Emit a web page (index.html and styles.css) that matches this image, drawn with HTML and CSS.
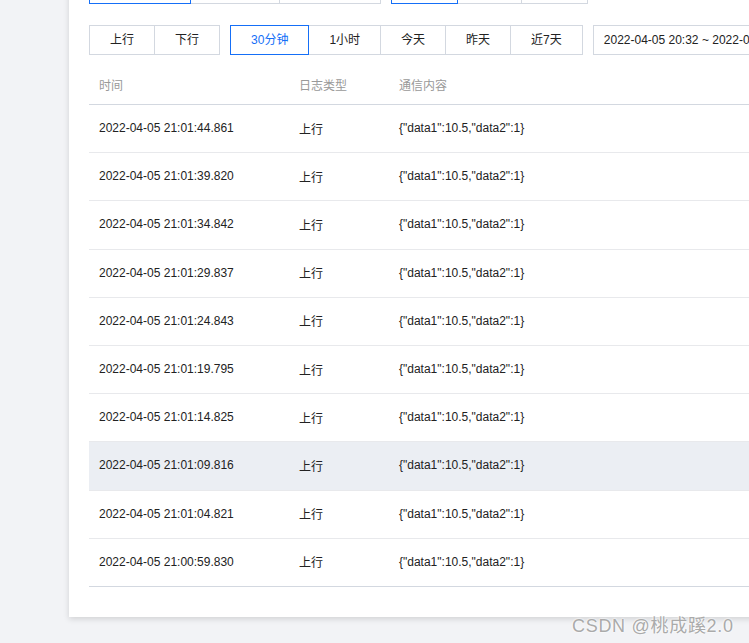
FILE: index.html
```html
<!DOCTYPE html>
<html lang="zh-CN">
<head>
<meta charset="utf-8">
<title>通信日志</title>
<link rel="stylesheet" href="styles.css">
</head>
<body>
<div class="card">
  <div class="toolbar toolbar-top">
    <div class="btn-group">
      <span class="btn btn-active btn-w101"></span>
      <span class="btn btn-w90"></span>
      <span class="btn btn-w102"></span>
    </div>
    <div class="btn-group">
      <span class="btn btn-active btn-w67"></span>
      <span class="btn btn-w65"></span>
      <span class="btn btn-w67"></span>
    </div>
  </div>
  <div class="toolbar">
    <div class="btn-group">
      <span class="btn">上行</span>
      <span class="btn">下行</span>
    </div>
    <div class="btn-group">
      <span class="btn btn-active">30分钟</span>
      <span class="btn">1小时</span>
      <span class="btn">今天</span>
      <span class="btn">昨天</span>
      <span class="btn">近7天</span>
    </div>
    <div class="date-input">2022-04-05 20:32 ~ 2022-04-05 21:02</div>
  </div>
  <table class="log-table">
    <thead>
      <tr><th class="c-time">时间</th><th class="c-type">日志类型</th><th class="c-content">通信内容</th></tr>
    </thead>
    <tbody>
      <tr><td>2022-04-05 21:01:44.861</td><td>上行</td><td>{"data1":10.5,"data2":1}</td></tr>
      <tr><td>2022-04-05 21:01:39.820</td><td>上行</td><td>{"data1":10.5,"data2":1}</td></tr>
      <tr><td>2022-04-05 21:01:34.842</td><td>上行</td><td>{"data1":10.5,"data2":1}</td></tr>
      <tr><td>2022-04-05 21:01:29.837</td><td>上行</td><td>{"data1":10.5,"data2":1}</td></tr>
      <tr><td>2022-04-05 21:01:24.843</td><td>上行</td><td>{"data1":10.5,"data2":1}</td></tr>
      <tr><td>2022-04-05 21:01:19.795</td><td>上行</td><td>{"data1":10.5,"data2":1}</td></tr>
      <tr><td>2022-04-05 21:01:14.825</td><td>上行</td><td>{"data1":10.5,"data2":1}</td></tr>
      <tr class="row-hover"><td>2022-04-05 21:01:09.816</td><td>上行</td><td>{"data1":10.5,"data2":1}</td></tr>
      <tr><td>2022-04-05 21:01:04.821</td><td>上行</td><td>{"data1":10.5,"data2":1}</td></tr>
      <tr class="row-last"><td>2022-04-05 21:00:59.830</td><td>上行</td><td>{"data1":10.5,"data2":1}</td></tr>
    </tbody>
  </table>
</div>
<div class="watermark">CSDN @桃成蹊2.0</div>
</body>
</html>
```

FILE: styles.css
```css
html, body {
  margin: 0;
  padding: 0;
  overflow: hidden;
}
body {
  background: #f2f3f6;
  font-family: "Liberation Sans", "Noto Sans CJK SC", sans-serif;
  font-size: 12px;
  color: #222;
  width: 749px;
  height: 643px;
  position: relative;
}
.card {
  margin: -46px 0 0 69px;
  width: 760px;
  background: #fff;
  padding: 20px 0 30px 20px;
  box-shadow: 0 2px 6px rgba(0, 0, 0, 0.14);
}
.toolbar {
  display: flex;
  gap: 10px;
  height: 30px;
  margin-bottom: 21px;
}
.toolbar-top {
  margin-bottom: 21px;
}
.btn-group {
  display: flex;
}
.btn {
  box-sizing: border-box;
  height: 30px;
  line-height: 28px;
  padding: 0 20px;
  border: 1px solid #d3d8e0;
  margin-left: -1px;
  color: #222;
  background: #fff;
  white-space: nowrap;
}
.btn:first-child {
  margin-left: 0;
}
.btn-active {
  border-color: #156ff7;
  color: #156ff7;
  position: relative;
  z-index: 1;
}
.btn-w101 { width: 102px; }
.btn-w90 { width: 90px; }
.btn-w102 { width: 102px; }
.btn-w67 { width: 67px; }
.btn-w65 { width: 65px; }
.date-input {
  box-sizing: border-box;
  height: 30px;
  line-height: 28px;
  border: 1px solid #d3d8e0;
  padding: 0 10px;
  white-space: nowrap;
  width: 220px;
  overflow: hidden;
}
.log-table {
  border-collapse: collapse;
  margin-top: -11px;
  width: 740px;
  table-layout: fixed;
}
.log-table th {
  text-align: left;
  font-weight: normal;
  color: #999;
  height: 38px;
  padding: 0 10px 1px;
  border-bottom: 1px solid #d3d8e0;
}
.c-time { width: 180px; }
.c-type { width: 80px; }
.log-table td {
  height: 46.2px;
  padding: 0 10px 1px;
  border-bottom: 1px solid #e8e9ec;
  white-space: nowrap;
  color: #222;
}
.log-table tr.row-hover td {
  background: #ebeef3;
}
.log-table tr.row-last td {
  border-bottom-color: #d3d8e0;
}
.watermark {
  position: absolute;
  left: 572px;
  top: 611px;
  font-size: 18px;
  letter-spacing: 0.7px;
  color: #aaa;
  text-shadow: 0 0 2px #fff, 0 0 2px #fff;
  white-space: nowrap;
}
```
